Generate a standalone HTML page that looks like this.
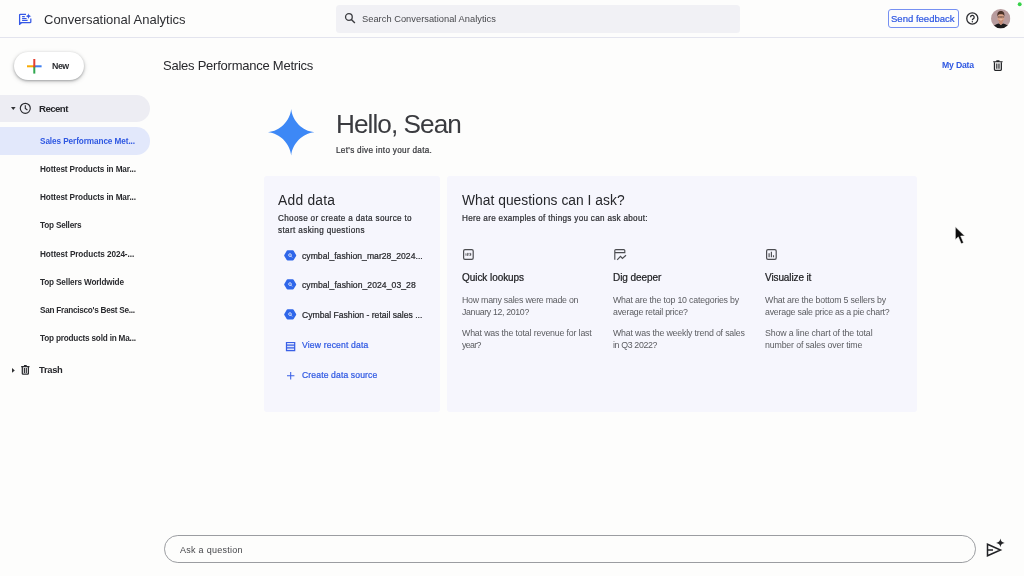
<!DOCTYPE html>
<html lang="en"><head><meta charset="utf-8"><title>Conversational Analytics</title>
<style>
*{box-sizing:border-box;margin:0;padding:0}
html,body{width:1024px;height:576px;overflow:hidden;background:#fdfdfc;font-family:"Liberation Sans",sans-serif;color:#202124}
.t{position:absolute;white-space:nowrap;line-height:1;will-change:transform}
.b{position:absolute}
svg{position:absolute;overflow:visible}
</style></head><body>
<!-- header -->
<div class="b" style="left:0;top:37px;width:1024px;height:1px;background:#e3e4ee"></div>
<svg style="left:18px;top:12px" width="15" height="14" viewBox="0 0 15 14"><path d="M8 2.300H2.400a.800.800 0 0 0-.800.800V12.400L3.700 10.500H12.200a.600.600 0 0 0 .600-.600V6.400" fill="none" stroke="#3558e6" stroke-width="1.250" stroke-linejoin="round"/><path d="M1.100 10v3.300L4.200 10.500z" fill="#3558e6"/><path d="M4.100 4.600h2.700M4.100 6.500h4.500M4.100 8.400h5.500" stroke="#3558e6" stroke-width="1.100"/><path d="M10.500 1.300C10.800 3.200 11.500 3.900 13.400 4.200C11.500 4.500 10.800 5.200 10.500 7.100C10.200 5.200 9.500 4.500 7.600 4.200C9.500 3.900 10.200 3.200 10.500 1.300z" fill="#3558e6"/></svg>
<div class="b" style="left:335.5px;top:5px;width:404px;height:27.5px;background:#f1f1f5;border-radius:3.5px"></div>
<svg style="left:344px;top:12px" width="12" height="12" viewBox="0 0 12 12"><circle cx="4.900" cy="5" r="3.350" fill="none" stroke="#3c3d41" stroke-width="1.300"/><path d="M7.400 7.500L10.900 11" stroke="#3c3d41" stroke-width="1.400"/></svg>
<div class="b" style="left:887.5px;top:9px;width:71.5px;height:19px;border:1px solid #7690f2;border-radius:3px"></div>
<svg style="left:965px;top:11px" width="15" height="15" viewBox="0 0 15 15"><circle cx="7.300" cy="7.500" r="5.550" fill="none" stroke="#2b2c30" stroke-width="1.300"/><path d="M5.500 6.300a1.850 1.850 0 1 1 2.700 1.600c-.600.350-.850.700-.850 1.350" fill="none" stroke="#2b2c30" stroke-width="1.250"/><circle cx="7.350" cy="10.700" r=".700" fill="#2b2c30"/></svg>
<svg style="left:991px;top:8.6px" width="19.4" height="19.4" viewBox="0 0 20 20"><defs><clipPath id="av"><circle cx="10" cy="10" r="10"/></clipPath></defs><g clip-path="url(#av)"><rect width="20" height="20" fill="#b89c9e"/><path d="M1.500 20C2.500 16.600 5.500 15.400 8.100 14.900L10.200 16.600L12.300 14.900C15 15.400 18 16.600 18.800 20z" fill="#1c1a1b"/><path d="M8.400 12h3.600v3l-1.800 1.600l-1.800-1.600z" fill="#c88c74"/><ellipse cx="10.200" cy="8.800" rx="3.500" ry="4.500" fill="#dfa88e"/><path d="M6.600 7.800C6.100 3.700 7.800 2.100 10.200 2.100C12.600 2.100 14.300 3.700 13.800 7.800C13.300 6.100 12.400 5.500 10.200 5.500C8 5.500 7.100 6.100 6.600 7.800z" fill="#4b3228"/><path d="M7 10.600c.600 2 1.800 2.800 3.200 2.800s2.600-.800 3.200-2.800c-1 .800-2 1.100-3.200 1.100s-2.200-.300-3.200-1.100z" fill="#b97f69" opacity=".750"/><path d="M7.300 7.700h2.400v1.300H7.300zM10.700 7.700h2.400v1.300h-2.400zM9.700 8.100h1" fill="none" stroke="#4a3530" stroke-width=".450"/><path d="M9.100 11.100q1.100.700 2.200 0" fill="none" stroke="#f6e9e3" stroke-width=".450"/></g></svg>
<svg style="left:1017px;top:2px" width="6" height="6" viewBox="0 0 6 6"><circle cx="2.700" cy="2.200" r="1.950" fill="#37d24a"/></svg>

<!-- new button -->
<div class="b" style="left:14.4px;top:51.7px;width:70px;height:28.2px;border-radius:14.1px;background:#fff;box-shadow:0 1px 2.5px rgba(60,64,67,.420),0 1.5px 4px 1px rgba(60,64,67,.130)"></div>
<svg style="left:27.3px;top:59px" width="14.600" height="14.600" viewBox="0 0 14.600 14.600"><rect x="0" y="6.300" width="7.300" height="2" fill="#f8ab04"/><rect x="7.300" y="6.300" width="7.300" height="2" fill="#3f7ff0"/><rect x="6.300" y="7.300" width="2" height="7.300" fill="#2fa84f"/><rect x="6.300" y="0" width="2" height="8.300" fill="#e43e30"/></svg>

<!-- top-right actions -->
<svg style="left:993.3px;top:60.1px" width="9.8" height="10.9" viewBox="0 0 10 11"><path d="M3.400 .700h3.200M.200 1.750h9.600" stroke="#222326" stroke-width="1.20" fill="none"/><path d="M1.500 2.300v7.400a.800.800 0 0 0 .800.800h5.400a.800.800 0 0 0 .800-.800V2.300" stroke="#222326" stroke-width="1.30" fill="none"/><path d="M3.900 3.500v5.500M6.100 3.500v5.500" stroke="#222326" stroke-width="1.20"/></svg>

<!-- sidebar -->
<div class="b" style="left:0;top:95.3px;width:150.3px;height:27px;border-radius:0 13.5px 13.5px 0;background:#ededf3"></div>
<div class="b" style="left:0;top:127.2px;width:150.3px;height:27.5px;border-radius:0 13.7px 13.7px 0;background:#e2e8fb"></div>
<svg style="left:10.5px;top:106.5px" width="4.600" height="3" viewBox="0 0 4.600 3"><path d="M0 0h4.600L2.300 2.900z" fill="#303134"/></svg>
<svg style="left:19px;top:102px" width="13" height="13" viewBox="0 0 13 13"><circle cx="6.300" cy="6.300" r="5" fill="none" stroke="#2b2c30" stroke-width="1.150"/><path d="M6.300 3.300v3.200l2.100 1.500" fill="none" stroke="#2b2c30" stroke-width="1.100"/></svg>
<svg style="left:11.7px;top:367.9px" width="3" height="4.800" viewBox="0 0 3 4.800"><path d="M0 0v4.800L2.800 2.400z" fill="#303134"/></svg>
<svg style="left:20.8px;top:365.2px" width="8.7" height="9.7" viewBox="0 0 10 11"><path d="M3.400 .700h3.200M.200 1.750h9.600" stroke="#2b2c30" stroke-width="1.32" fill="none"/><path d="M1.500 2.300v7.400a.800.800 0 0 0 .800.800h5.400a.800.800 0 0 0 .800-.800V2.300" stroke="#2b2c30" stroke-width="1.43" fill="none"/><path d="M3.900 3.500v5.500M6.100 3.500v5.500" stroke="#2b2c30" stroke-width="1.32"/></svg>

<!-- hero star -->
<svg style="left:268px;top:109.3px" width="46.400" height="46.400" viewBox="0 0 46 46"><path d="M23 0C24.2 11.9 34.1 21.8 46 23C34.1 24.2 24.2 34.1 23 46C21.8 34.1 11.9 24.2 0 23C11.9 21.8 21.8 11.9 23 0z" fill="#3d88f6"/></svg>

<!-- cards -->
<div class="b" style="left:264px;top:176px;width:176px;height:235.6px;background:#f6f6fd;border-radius:3px"></div>
<div class="b" style="left:446.7px;top:176px;width:470.3px;height:235.6px;background:#f6f6fd;border-radius:3px"></div>

<!-- data source icons -->
<svg style="left:283.8px;top:249.5px" width="12.400" height="10.800" viewBox="0 0 12.400 10.800"><path d="M3.600 .300h5.200a1 1 0 0 1 .850.500l2.450 4.100a1 1 0 0 1 0 1l-2.450 4.100a1 1 0 0 1-.850.500H3.600a1 1 0 0 1-.850-.500L.300 5.900a1 1 0 0 1 0-1L2.750 .800A1 1 0 0 1 3.600 .300z" fill="#2f66e9"/><circle cx="6" cy="5.100" r="1.350" fill="none" stroke="#fff" stroke-width=".750"/><path d="M7 6.200l1.100 1.200" stroke="#fff" stroke-width=".750"/></svg>
<svg style="left:283.8px;top:279.4px" width="12.400" height="10.800" viewBox="0 0 12.400 10.800"><path d="M3.600 .300h5.200a1 1 0 0 1 .850.500l2.450 4.100a1 1 0 0 1 0 1l-2.450 4.100a1 1 0 0 1-.850.500H3.600a1 1 0 0 1-.850-.500L.300 5.900a1 1 0 0 1 0-1L2.750 .800A1 1 0 0 1 3.600 .300z" fill="#2f66e9"/><circle cx="6" cy="5.100" r="1.350" fill="none" stroke="#fff" stroke-width=".750"/><path d="M7 6.200l1.100 1.200" stroke="#fff" stroke-width=".750"/></svg>
<svg style="left:283.8px;top:309.3px" width="12.400" height="10.800" viewBox="0 0 12.400 10.800"><path d="M3.600 .300h5.200a1 1 0 0 1 .850.500l2.450 4.100a1 1 0 0 1 0 1l-2.450 4.100a1 1 0 0 1-.850.500H3.600a1 1 0 0 1-.850-.500L.300 5.900a1 1 0 0 1 0-1L2.750 .800A1 1 0 0 1 3.600 .300z" fill="#2f66e9"/><circle cx="6" cy="5.100" r="1.350" fill="none" stroke="#fff" stroke-width=".750"/><path d="M7 6.200l1.100 1.200" stroke="#fff" stroke-width=".750"/></svg>
<svg style="left:285.9px;top:341.9px" width="9.200" height="9.200" viewBox="0 0 9.200 9.200"><path d="M.500 .500h8.200v8.200H.500zM.500 3.250h8.200M.500 5.950h8.200" fill="#dfe5fb" stroke="#3a60e6" stroke-width="1.250"/></svg>
<svg style="left:286.8px;top:372.4px" width="7.400" height="7.400" viewBox="0 0 7.400 7.400"><path d="M3.700 0v7.400M0 3.700h7.400" stroke="#3a60e6" stroke-width="1.050"/></svg>

<!-- question icons -->
<svg style="left:463.4px;top:249px" width="10.800" height="10.900" viewBox="0 0 10.800 10.900"><rect x=".600" y=".600" width="9.600" height="9.700" rx="1.400" fill="none" stroke="#4c4d51" stroke-width="1.200"/><path d="M2.900 4.300v2.400M4 4.400h1.300v1H4.100v1h1.300M6.400 4.400h1.400v1H6.900h.900v1H6.400" fill="none" stroke="#4c4d51" stroke-width=".750"/></svg>
<svg style="left:614px;top:249px" width="13" height="12" viewBox="0 0 13 12"><path d="M.800 10.700V1.600a1 1 0 0 1 1-1h8a1 1 0 0 1 1 1V3.600H.800" fill="none" stroke="#4c4d51" stroke-width="1.150"/><path d="M3.200 10.800L6.500 7.300L8.400 9.400L12 6.200" fill="none" stroke="#4c4d51" stroke-width="1.200"/></svg>
<svg style="left:766.2px;top:249px" width="10.800" height="10.900" viewBox="0 0 10.800 10.900"><rect x=".600" y=".600" width="9.600" height="9.700" rx="1.400" fill="none" stroke="#4c4d51" stroke-width="1.200"/><path d="M3.100 4.300v3.900M5.400 2.800v5.400M7.500 6.300v1.900" stroke="#4c4d51" stroke-width="1.150"/></svg>

<!-- ask input -->
<div class="b" style="left:164px;top:535.3px;width:811.8px;height:27.5px;border:1px solid #9b9da1;border-radius:13.8px"></div>
<svg style="left:986px;top:538px" width="19" height="19" viewBox="0 0 19 19"><path d="M1.500 6.200v11.600L14.500 12zM1.500 12h5.500" fill="none" stroke="#222326" stroke-width="1.500" stroke-linejoin="miter"/><path d="M14.400 .600C14.850 3.500 15.800 4.450 18.700 4.900C15.800 5.350 14.850 6.300 14.400 9.200C13.950 6.300 13 5.350 10.100 4.900C13 4.450 13.950 3.500 14.400 .600z" fill="#222326"/></svg>

<!-- mouse pointer -->
<svg style="left:954px;top:225px" width="13" height="21" viewBox="0 0 13 21"><path d="M1.300 1.800V14.700L4.300 11.900L7.200 18.800L9.600 17.800L6.700 11H10.800z" fill="#0c0c0c" stroke="#fdfdfc" stroke-width=".600"/></svg>

<div class="t" style="left:44.3px;top:13.10px;font-size:13.0px;font-weight:normal;color:#2d2e32;letter-spacing:-0.002px">Conversational Analytics</div>
<div class="t" style="left:362.0px;top:14.50px;font-size:9.3px;font-weight:normal;color:#48494d;letter-spacing:0.019px">Search Conversational Analytics</div>
<div class="t" style="left:891.4px;top:13.61px;font-size:9.5px;font-weight:normal;color:#2f58e2;letter-spacing:0.017px;-webkit-text-stroke:0.22px #2f58e2">Send feedback</div>
<div class="t" style="left:52.3px;top:62.20px;font-size:8.8px;font-weight:bold;color:#2a2b2f;letter-spacing:-0.447px">New</div>
<div class="t" style="left:163.3px;top:58.60px;font-size:13.0px;font-weight:normal;color:#28292d;letter-spacing:-0.240px">Sales Performance Metrics</div>
<div class="t" style="left:942.3px;top:61.40px;font-size:8.7px;font-weight:bold;color:#2f58e2;letter-spacing:-0.202px">My Data</div>
<div class="t" style="left:39.0px;top:103.90px;font-size:9.7px;font-weight:bold;color:#26272b;letter-spacing:-0.582px">Recent</div>
<div class="t" style="left:40.2px;top:137.91px;font-size:8.2px;font-weight:bold;color:#2f58e2;letter-spacing:-0.082px">Sales Performance Met...</div>
<div class="t" style="left:40.2px;top:166.07px;font-size:8.2px;font-weight:bold;color:#2a2b2f;letter-spacing:-0.107px">Hottest Products in Mar...</div>
<div class="t" style="left:40.2px;top:194.24px;font-size:8.2px;font-weight:bold;color:#2a2b2f;letter-spacing:-0.107px">Hottest Products in Mar...</div>
<div class="t" style="left:40.2px;top:222.41px;font-size:8.2px;font-weight:bold;color:#2a2b2f;letter-spacing:-0.193px">Top Sellers</div>
<div class="t" style="left:40.2px;top:250.59px;font-size:8.2px;font-weight:bold;color:#2a2b2f;letter-spacing:-0.075px">Hottest Products 2024-...</div>
<div class="t" style="left:40.2px;top:278.76px;font-size:8.2px;font-weight:bold;color:#2a2b2f;letter-spacing:-0.152px">Top Sellers Worldwide</div>
<div class="t" style="left:40.2px;top:306.93px;font-size:8.2px;font-weight:bold;color:#2a2b2f;letter-spacing:-0.260px">San Francisco&#x27;s Best Se...</div>
<div class="t" style="left:40.2px;top:335.10px;font-size:8.2px;font-weight:bold;color:#2a2b2f;letter-spacing:-0.191px">Top products sold in Ma...</div>
<div class="t" style="left:39.0px;top:365.12px;font-size:9.4px;font-weight:bold;color:#26272b;letter-spacing:-0.304px">Trash</div>
<div class="t" style="left:335.7px;top:111.12px;font-size:26.2px;font-weight:normal;color:#3a3b3f;letter-spacing:-0.949px">Hello, Sean</div>
<div class="t" style="left:336.1px;top:146.80px;font-size:8.2px;font-weight:normal;color:#36373b;letter-spacing:0.296px;-webkit-text-stroke:0.22px #36373b">Let&#x27;s dive into your data.</div>
<div class="t" style="left:278.4px;top:194.01px;font-size:13.8px;font-weight:normal;color:#26272b;letter-spacing:0.250px">Add data</div>
<div class="t" style="left:278.4px;top:215.01px;font-size:8.15px;font-weight:normal;color:#2d2e32;letter-spacing:0.336px;-webkit-text-stroke:0.22px #2d2e32">Choose or create a data source to</div>
<div class="t" style="left:278.4px;top:226.70px;font-size:8.15px;font-weight:normal;color:#2d2e32;letter-spacing:0.376px;-webkit-text-stroke:0.22px #2d2e32">start asking questions</div>
<div class="t" style="left:301.6px;top:251.80px;font-size:8.6px;font-weight:normal;color:#26272b;letter-spacing:0.029px;-webkit-text-stroke:0.22px #26272b">cymbal_fashion_mar28_2024...</div>
<div class="t" style="left:301.6px;top:281.21px;font-size:8.6px;font-weight:normal;color:#26272b;letter-spacing:0.058px;-webkit-text-stroke:0.22px #26272b">cymbal_fashion_2024_03_28</div>
<div class="t" style="left:301.6px;top:311.11px;font-size:8.6px;font-weight:normal;color:#26272b;letter-spacing:0.001px;-webkit-text-stroke:0.22px #26272b">Cymbal Fashion - retail sales ...</div>
<div class="t" style="left:301.6px;top:341.30px;font-size:8.6px;font-weight:normal;color:#2f58e2;letter-spacing:0.163px;-webkit-text-stroke:0.22px #2f58e2">View recent data</div>
<div class="t" style="left:301.6px;top:371.21px;font-size:8.6px;font-weight:normal;color:#2f58e2;letter-spacing:0.130px;-webkit-text-stroke:0.22px #2f58e2">Create data source</div>
<div class="t" style="left:462.2px;top:194.31px;font-size:13.8px;font-weight:normal;color:#26272b;letter-spacing:0.032px">What questions can I ask?</div>
<div class="t" style="left:462.2px;top:214.90px;font-size:8.15px;font-weight:normal;color:#2d2e32;letter-spacing:0.300px;-webkit-text-stroke:0.22px #2d2e32">Here are examples of things you can ask about:</div>
<div class="t" style="left:462.2px;top:273.40px;font-size:10px;font-weight:normal;color:#202124;letter-spacing:-0.059px;-webkit-text-stroke:0.22px #202124">Quick lookups</div>
<div class="t" style="left:613.3px;top:273.40px;font-size:10px;font-weight:normal;color:#202124;letter-spacing:-0.058px;-webkit-text-stroke:0.22px #202124">Dig deeper</div>
<div class="t" style="left:764.8px;top:273.40px;font-size:10px;font-weight:normal;color:#202124;letter-spacing:-0.111px;-webkit-text-stroke:0.22px #202124">Visualize it</div>
<div class="t" style="left:462.1px;top:296.20px;font-size:8.8px;font-weight:normal;color:#5b5c60;letter-spacing:-0.240px">How many sales were made on</div>
<div class="t" style="left:462.1px;top:308.11px;font-size:8.8px;font-weight:normal;color:#5b5c60;letter-spacing:-0.348px">January 12, 2010?</div>
<div class="t" style="left:462.1px;top:329.11px;font-size:8.8px;font-weight:normal;color:#5b5c60;letter-spacing:-0.166px">What was the total revenue for last</div>
<div class="t" style="left:462.1px;top:340.91px;font-size:8.8px;font-weight:normal;color:#5b5c60;letter-spacing:-0.679px">year?</div>
<div class="t" style="left:613.3px;top:296.20px;font-size:8.8px;font-weight:normal;color:#5b5c60;letter-spacing:-0.182px">What are the top 10 categories by</div>
<div class="t" style="left:613.3px;top:308.11px;font-size:8.8px;font-weight:normal;color:#5b5c60;letter-spacing:-0.236px">average retail price?</div>
<div class="t" style="left:613.3px;top:329.11px;font-size:8.8px;font-weight:normal;color:#5b5c60;letter-spacing:-0.179px">What was the weekly trend of sales</div>
<div class="t" style="left:613.3px;top:340.91px;font-size:8.8px;font-weight:normal;color:#5b5c60;letter-spacing:-0.354px">in Q3 2022?</div>
<div class="t" style="left:764.6px;top:296.20px;font-size:8.8px;font-weight:normal;color:#5b5c60;letter-spacing:-0.176px">What are the bottom 5 sellers by</div>
<div class="t" style="left:764.6px;top:308.11px;font-size:8.8px;font-weight:normal;color:#5b5c60;letter-spacing:-0.222px">average sale price as a pie chart?</div>
<div class="t" style="left:764.6px;top:329.11px;font-size:8.8px;font-weight:normal;color:#5b5c60;letter-spacing:-0.118px">Show a line chart of the total</div>
<div class="t" style="left:764.6px;top:340.91px;font-size:8.8px;font-weight:normal;color:#5b5c60;letter-spacing:-0.159px">number of sales over time</div>
<div class="t" style="left:180.0px;top:545.51px;font-size:9.0px;font-weight:normal;color:#46474b;letter-spacing:0.273px">Ask a question</div>
</body></html>
